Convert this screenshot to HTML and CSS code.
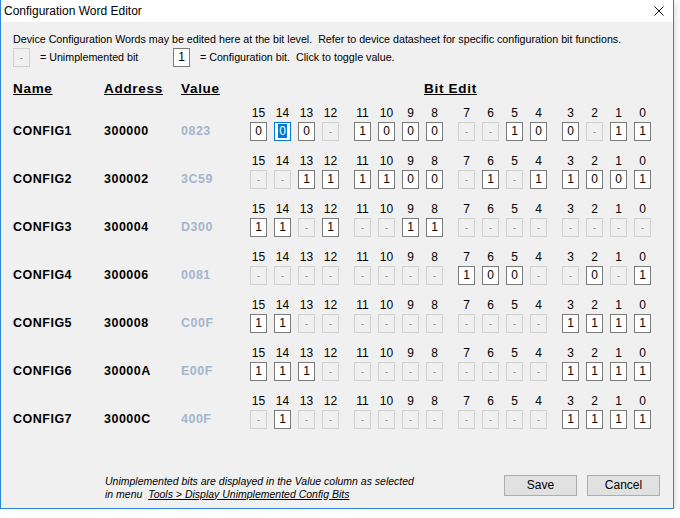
FILE: index.html
```html
<!DOCTYPE html>
<html>
<head>
<meta charset="utf-8">
<title>Configuration Word Editor</title>
<link rel="stylesheet" href="styles.css">
</head>
<body>
<div class="window">
  <div class="titlebar">
    <span class="title">Configuration Word Editor</span>
    <svg class="close" viewBox="0 0 10 10" width="10" height="10"><path d="M0.5 0.5 L9.5 9.5 M9.5 0.5 L0.5 9.5" stroke="#111" stroke-width="1" fill="none"/></svg>
  </div>
  <div class="content">
    <div class="desc">Device Configuration Words may be edited here at the bit level.&nbsp; Refer to device datasheet for specific configuration bit functions.</div>
    <div class="legend">
      <span class="box na">-</span><span class="legend-text first">= Unimplemented bit</span>
      <span class="box">1</span><span class="legend-text">= Configuration bit.&nbsp; Click to toggle value.</span>
    </div>
    <div class="head">
      <div class="c-name">Name</div>
      <div class="c-addr">Address</div>
      <div class="c-val">Value</div>
      <div class="c-bits">Bit Edit</div>
    </div>
    <div class="rows">
      <div class="row">
        <div class="c-name cell">CONFIG1</div><div class="c-addr cell">300000</div><div class="c-val cell val">0823</div>
        <div class="bits">
          <div class="nib"><div class="bit"><span class="num">15</span><span class="box">0</span></div><div class="bit"><span class="num">14</span><span class="box focus"><span class="sel">0</span></span></div><div class="bit"><span class="num">13</span><span class="box">0</span></div><div class="bit"><span class="num">12</span><span class="box na">-</span></div></div>
          <div class="nib"><div class="bit"><span class="num">11</span><span class="box">1</span></div><div class="bit"><span class="num">10</span><span class="box">0</span></div><div class="bit"><span class="num">9</span><span class="box">0</span></div><div class="bit"><span class="num">8</span><span class="box">0</span></div></div>
          <div class="nib"><div class="bit"><span class="num">7</span><span class="box na">-</span></div><div class="bit"><span class="num">6</span><span class="box na">-</span></div><div class="bit"><span class="num">5</span><span class="box">1</span></div><div class="bit"><span class="num">4</span><span class="box">0</span></div></div>
          <div class="nib"><div class="bit"><span class="num">3</span><span class="box">0</span></div><div class="bit"><span class="num">2</span><span class="box na">-</span></div><div class="bit"><span class="num">1</span><span class="box">1</span></div><div class="bit"><span class="num">0</span><span class="box">1</span></div></div>
        </div>
      </div>
      <div class="row">
        <div class="c-name cell">CONFIG2</div><div class="c-addr cell">300002</div><div class="c-val cell val">3C59</div>
        <div class="bits">
          <div class="nib"><div class="bit"><span class="num">15</span><span class="box na">-</span></div><div class="bit"><span class="num">14</span><span class="box na">-</span></div><div class="bit"><span class="num">13</span><span class="box">1</span></div><div class="bit"><span class="num">12</span><span class="box">1</span></div></div>
          <div class="nib"><div class="bit"><span class="num">11</span><span class="box">1</span></div><div class="bit"><span class="num">10</span><span class="box">1</span></div><div class="bit"><span class="num">9</span><span class="box">0</span></div><div class="bit"><span class="num">8</span><span class="box">0</span></div></div>
          <div class="nib"><div class="bit"><span class="num">7</span><span class="box na">-</span></div><div class="bit"><span class="num">6</span><span class="box">1</span></div><div class="bit"><span class="num">5</span><span class="box na">-</span></div><div class="bit"><span class="num">4</span><span class="box">1</span></div></div>
          <div class="nib"><div class="bit"><span class="num">3</span><span class="box">1</span></div><div class="bit"><span class="num">2</span><span class="box">0</span></div><div class="bit"><span class="num">1</span><span class="box">0</span></div><div class="bit"><span class="num">0</span><span class="box">1</span></div></div>
        </div>
      </div>
      <div class="row">
        <div class="c-name cell">CONFIG3</div><div class="c-addr cell">300004</div><div class="c-val cell val">D300</div>
        <div class="bits">
          <div class="nib"><div class="bit"><span class="num">15</span><span class="box">1</span></div><div class="bit"><span class="num">14</span><span class="box">1</span></div><div class="bit"><span class="num">13</span><span class="box na">-</span></div><div class="bit"><span class="num">12</span><span class="box">1</span></div></div>
          <div class="nib"><div class="bit"><span class="num">11</span><span class="box na">-</span></div><div class="bit"><span class="num">10</span><span class="box na">-</span></div><div class="bit"><span class="num">9</span><span class="box">1</span></div><div class="bit"><span class="num">8</span><span class="box">1</span></div></div>
          <div class="nib"><div class="bit"><span class="num">7</span><span class="box na">-</span></div><div class="bit"><span class="num">6</span><span class="box na">-</span></div><div class="bit"><span class="num">5</span><span class="box na">-</span></div><div class="bit"><span class="num">4</span><span class="box na">-</span></div></div>
          <div class="nib"><div class="bit"><span class="num">3</span><span class="box na">-</span></div><div class="bit"><span class="num">2</span><span class="box na">-</span></div><div class="bit"><span class="num">1</span><span class="box na">-</span></div><div class="bit"><span class="num">0</span><span class="box na">-</span></div></div>
        </div>
      </div>
      <div class="row">
        <div class="c-name cell">CONFIG4</div><div class="c-addr cell">300006</div><div class="c-val cell val">0081</div>
        <div class="bits">
          <div class="nib"><div class="bit"><span class="num">15</span><span class="box na">-</span></div><div class="bit"><span class="num">14</span><span class="box na">-</span></div><div class="bit"><span class="num">13</span><span class="box na">-</span></div><div class="bit"><span class="num">12</span><span class="box na">-</span></div></div>
          <div class="nib"><div class="bit"><span class="num">11</span><span class="box na">-</span></div><div class="bit"><span class="num">10</span><span class="box na">-</span></div><div class="bit"><span class="num">9</span><span class="box na">-</span></div><div class="bit"><span class="num">8</span><span class="box na">-</span></div></div>
          <div class="nib"><div class="bit"><span class="num">7</span><span class="box">1</span></div><div class="bit"><span class="num">6</span><span class="box">0</span></div><div class="bit"><span class="num">5</span><span class="box">0</span></div><div class="bit"><span class="num">4</span><span class="box na">-</span></div></div>
          <div class="nib"><div class="bit"><span class="num">3</span><span class="box na">-</span></div><div class="bit"><span class="num">2</span><span class="box">0</span></div><div class="bit"><span class="num">1</span><span class="box na">-</span></div><div class="bit"><span class="num">0</span><span class="box">1</span></div></div>
        </div>
      </div>
      <div class="row">
        <div class="c-name cell">CONFIG5</div><div class="c-addr cell">300008</div><div class="c-val cell val">C00F</div>
        <div class="bits">
          <div class="nib"><div class="bit"><span class="num">15</span><span class="box">1</span></div><div class="bit"><span class="num">14</span><span class="box">1</span></div><div class="bit"><span class="num">13</span><span class="box na">-</span></div><div class="bit"><span class="num">12</span><span class="box na">-</span></div></div>
          <div class="nib"><div class="bit"><span class="num">11</span><span class="box na">-</span></div><div class="bit"><span class="num">10</span><span class="box na">-</span></div><div class="bit"><span class="num">9</span><span class="box na">-</span></div><div class="bit"><span class="num">8</span><span class="box na">-</span></div></div>
          <div class="nib"><div class="bit"><span class="num">7</span><span class="box na">-</span></div><div class="bit"><span class="num">6</span><span class="box na">-</span></div><div class="bit"><span class="num">5</span><span class="box na">-</span></div><div class="bit"><span class="num">4</span><span class="box na">-</span></div></div>
          <div class="nib"><div class="bit"><span class="num">3</span><span class="box">1</span></div><div class="bit"><span class="num">2</span><span class="box">1</span></div><div class="bit"><span class="num">1</span><span class="box">1</span></div><div class="bit"><span class="num">0</span><span class="box">1</span></div></div>
        </div>
      </div>
      <div class="row">
        <div class="c-name cell">CONFIG6</div><div class="c-addr cell">30000A</div><div class="c-val cell val">E00F</div>
        <div class="bits">
          <div class="nib"><div class="bit"><span class="num">15</span><span class="box">1</span></div><div class="bit"><span class="num">14</span><span class="box">1</span></div><div class="bit"><span class="num">13</span><span class="box">1</span></div><div class="bit"><span class="num">12</span><span class="box na">-</span></div></div>
          <div class="nib"><div class="bit"><span class="num">11</span><span class="box na">-</span></div><div class="bit"><span class="num">10</span><span class="box na">-</span></div><div class="bit"><span class="num">9</span><span class="box na">-</span></div><div class="bit"><span class="num">8</span><span class="box na">-</span></div></div>
          <div class="nib"><div class="bit"><span class="num">7</span><span class="box na">-</span></div><div class="bit"><span class="num">6</span><span class="box na">-</span></div><div class="bit"><span class="num">5</span><span class="box na">-</span></div><div class="bit"><span class="num">4</span><span class="box na">-</span></div></div>
          <div class="nib"><div class="bit"><span class="num">3</span><span class="box">1</span></div><div class="bit"><span class="num">2</span><span class="box">1</span></div><div class="bit"><span class="num">1</span><span class="box">1</span></div><div class="bit"><span class="num">0</span><span class="box">1</span></div></div>
        </div>
      </div>
      <div class="row">
        <div class="c-name cell">CONFIG7</div><div class="c-addr cell">30000C</div><div class="c-val cell val">400F</div>
        <div class="bits">
          <div class="nib"><div class="bit"><span class="num">15</span><span class="box na">-</span></div><div class="bit"><span class="num">14</span><span class="box">1</span></div><div class="bit"><span class="num">13</span><span class="box na">-</span></div><div class="bit"><span class="num">12</span><span class="box na">-</span></div></div>
          <div class="nib"><div class="bit"><span class="num">11</span><span class="box na">-</span></div><div class="bit"><span class="num">10</span><span class="box na">-</span></div><div class="bit"><span class="num">9</span><span class="box na">-</span></div><div class="bit"><span class="num">8</span><span class="box na">-</span></div></div>
          <div class="nib"><div class="bit"><span class="num">7</span><span class="box na">-</span></div><div class="bit"><span class="num">6</span><span class="box na">-</span></div><div class="bit"><span class="num">5</span><span class="box na">-</span></div><div class="bit"><span class="num">4</span><span class="box na">-</span></div></div>
          <div class="nib"><div class="bit"><span class="num">3</span><span class="box">1</span></div><div class="bit"><span class="num">2</span><span class="box">1</span></div><div class="bit"><span class="num">1</span><span class="box">1</span></div><div class="bit"><span class="num">0</span><span class="box">1</span></div></div>
        </div>
      </div>
    </div>
  </div>
  <div class="footer">
    <div class="note">
      <div>Unimplemented bits are displayed in the Value column as selected</div>
      <div>in menu&nbsp; <span class="link">Tools &gt; Display Unimplemented Config Bits</span></div>
    </div>
    <button class="btn">Save</button>
    <button class="btn">Cancel</button>
  </div>
</div>
</body>
</html>
```

FILE: styles.css
```css
* { box-sizing: border-box; }
html, body { margin: 0; padding: 0; background: #ffffff; }
body { font-family: "Liberation Sans", Arial, sans-serif; color: #000; }

.window {
  width: 674px;
  height: 509px;
  background: #f0f0f0;
  border: 1px solid #2b85d6;
  border-top: none;
  display: flex;
  flex-direction: column;
  box-shadow: 0 3px 8px rgba(0, 0, 0, 0.22);
}

.titlebar {
  height: 22px;
  background: #ffffff;
  display: flex;
  align-items: center;
  justify-content: space-between;
  padding-left: 3px;
  font-size: 12px;
  flex: none;
}
.close { display: block; margin-right: 9px; }

.content {
  flex: 1;
  padding: 10px 0 0 12px;
  font-size: 10.7px;
}
.desc { height: 14px; line-height: 14px; white-space: nowrap; }

.legend { display: flex; align-items: center; margin-top: 2px; height: 19px; }
.legend-text { padding-left: 10px; line-height: 19px; white-space: nowrap; }
.legend-text.first { width: 143px; }

.box {
  display: block;
  width: 17px;
  height: 19px;
  border: 1px solid #7a7a7a;
  background: #ffffff;
  font-size: 12px;
  line-height: 17px;
  text-align: center;
  color: #000;
}
.box.na {
  border-color: #d0d0d0;
  background: #f0f0f0;
  color: #8c8c8c;
  font-size: 10px;
}
.box.focus { border-color: #0078d7; }
.sel { background: #0078d7; color: #fff; padding: 0 1px; }

.head {
  display: flex;
  margin-top: 13px;
  height: 18px;
  line-height: 18px;
  font-size: 13.5px;
  font-weight: bold;
  letter-spacing: 0.7px;
  text-decoration: underline;
  white-space: nowrap;
}
.c-name { width: 91px; flex: none; }
.c-addr { width: 77px; flex: none; }
.c-val { width: 69px; flex: none; }
.c-bits { width: 401px; text-align: center; flex: none; }

.rows { margin-top: 8px; }
.row { display: flex; align-items: flex-start; height: 48px; }
.cell {
  padding-top: 16px;
  line-height: 19px;
  font-size: 12.5px;
  font-weight: bold;
  letter-spacing: 0.5px;
  white-space: nowrap;
}
.val { color: #a3b6cd; }

.bits { display: flex; gap: 15px; }
.nib { display: flex; gap: 7px; }
.bit { display: flex; flex-direction: column; align-items: center; width: 17px; }
.num { display: block; height: 14px; line-height: 14px; margin-bottom: 2px; font-size: 12px; white-space: nowrap; }

.footer {
  flex: none;
  display: flex;
  align-items: center;
  height: 30px;
  margin-bottom: 8px;
  padding: 0 13px 0 104px;
}
.note {
  flex: 1;
  font-size: 10.5px;
  font-style: italic;
  line-height: 13px;
  padding-top: 5px;
  white-space: nowrap;
}
.link { text-decoration: underline; }
.btn {
  width: 73px;
  height: 21px;
  margin-left: 10px;
  background: #e1e1e1;
  border: 1px solid #adadad;
  font-family: "Liberation Sans", Arial, sans-serif;
  font-size: 12px;
  color: #000;
  padding: 0;
}
```
